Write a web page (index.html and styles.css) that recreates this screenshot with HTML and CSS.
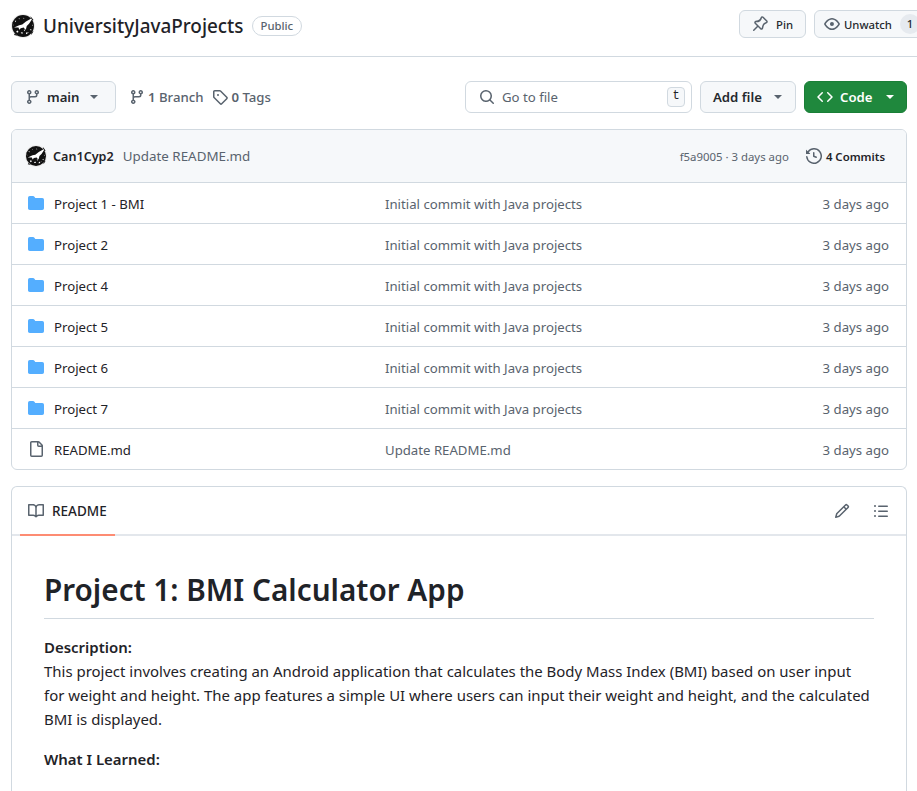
FILE: index.html
```html
<!DOCTYPE html>
<html lang="en">
<head>
    <meta charset="UTF-8">
    <meta name="viewport" content="width=device-width, initial-scale=1.0">
    <title>UniversityJavaProjects</title>
    <link rel="stylesheet" href="styles.css">
</head>
<body>
    <svg class="icon-defs" width="0" height="0">
        <defs>
            <symbol id="i-branch" viewBox="0 0 16 16"><path d="M9.5 3.25a2.25 2.25 0 1 1 3 2.122V6A2.5 2.5 0 0 1 10 8.5H6a1 1 0 0 0-1 1v1.128a2.251 2.251 0 1 1-1.5 0V5.372a2.25 2.25 0 1 1 1.5 0v1.836A2.493 2.493 0 0 1 6 7h4a1 1 0 0 0 1-1v-.628A2.25 2.25 0 0 1 9.5 3.25Zm-6 0a.75.75 0 1 0 1.5 0 .75.75 0 0 0-1.5 0Zm8.25-.75a.75.75 0 1 0 0 1.5.75.75 0 0 0 0-1.5ZM4.25 12a.75.75 0 1 0 0 1.5.75.75 0 0 0 0-1.5Z"/></symbol>
            <symbol id="i-tag" viewBox="0 0 16 16"><path d="M1 7.775V2.75C1 1.784 1.784 1 2.75 1h5.025c.464 0 .91.184 1.238.513l6.25 6.25a1.75 1.75 0 0 1 0 2.474l-5.026 5.026a1.75 1.75 0 0 1-2.474 0l-6.25-6.25A1.752 1.752 0 0 1 1 7.775Zm1.5 0c0 .066.026.13.073.177l6.25 6.25a.25.25 0 0 0 .354 0l5.025-5.025a.25.25 0 0 0 0-.354l-6.25-6.25a.25.25 0 0 0-.177-.073H2.75a.25.25 0 0 0-.25.25ZM6 5a1 1 0 1 1 0 2 1 1 0 0 1 0-2Z"/></symbol>
            <symbol id="i-folder" viewBox="0 0 16 16"><path d="M1.75 1A1.75 1.75 0 0 0 0 2.75v10.5C0 14.216.784 15 1.75 15h12.5A1.75 1.75 0 0 0 16 13.25v-8.5A1.75 1.75 0 0 0 14.25 3H7.5a.25.25 0 0 1-.2-.1l-.9-1.2C6.07 1.26 5.55 1 5 1H1.75Z"/></symbol>
            <symbol id="i-file" viewBox="0 0 16 16"><path d="M2 1.75C2 .784 2.784 0 3.75 0h6.586c.464 0 .909.184 1.237.513l2.914 2.914c.329.328.513.773.513 1.237v9.586A1.75 1.75 0 0 1 13.25 16h-9.5A1.75 1.75 0 0 1 2 14.25Zm1.75-.25a.25.25 0 0 0-.25.25v12.5c0 .138.112.25.25.25h9.5a.25.25 0 0 0 .25-.25V6h-2.75A1.75 1.75 0 0 1 9 4.25V1.5Zm6.75.062V4.25c0 .138.112.25.25.25h2.688l-.011-.013-2.914-2.914-.013-.011Z"/></symbol>
            <symbol id="i-avatar" viewBox="0 0 32 32">
                <circle cx="16" cy="16" r="16" fill="#ececec"/>
                <circle cx="16" cy="16" r="14.6" fill="#111"/>
                <path fill="#111" d="M2 11l4-1 0 4-3 1ZM26 3l4 5-3 1ZM27 24l3-1-3 5ZM5 26l4 3-5-1Z"/>
                <path fill="#fff" d="M4 18l7-3 4-1 5-4 7-4 1 1-4 6-3 3-1 4-1 1-2-3-4 1-2 2-1-3-5 0Z"/>
                <path fill="#fff" d="M7 23l2-1 1 2-2 1ZM20 25l2-1 0 2-2 1ZM13 25l2-1 1 2-2 0ZM5 9l2 0-1 2ZM25 21l2-1 0 2ZM10 6l2 0-1 1ZM17 5l1 1-2 0ZM3 14l1 1-1 0ZM29 15l-1 1 0-2ZM17 21l2 0-1 2ZM23 24l1 0 0 1Z"/>
            </symbol>
        </defs>
    </svg>

    <div class="page">
        <header class="repo-head">
            <div class="repo-title">
                <svg class="avatar avatar-lg"><use href="#i-avatar"/></svg>
                <span class="repo-name">UniversityJavaProjects</span>
                <span class="badge">Public</span>
            </div>
            <div class="repo-actions">
                <button class="btn btn-sm btn-pin">
                    <svg class="icon" viewBox="0 0 16 16"><path d="M4.456.734a1.75 1.75 0 0 1 2.826.504l.613 1.327a3.08 3.08 0 0 0 2.084 1.707l2.454.584c1.332.317 1.8 1.972.832 2.94L11.06 10l3.72 3.72a.748.748 0 0 1-.332 1.265.75.75 0 0 1-.729-.205L10 11.06l-2.204 2.205c-.968.968-2.623.5-2.94-.832l-.584-2.454a3.08 3.08 0 0 0-1.707-2.084l-1.327-.613a1.75 1.75 0 0 1-.504-2.826L4.456.734ZM5.92 1.866a.25.25 0 0 0-.404-.072L1.794 5.516a.25.25 0 0 0 .072.404l1.328.613A4.582 4.582 0 0 1 5.73 9.63l.584 2.454a.25.25 0 0 0 .42.12l5.47-5.47a.25.25 0 0 0-.12-.42L9.63 6.13a4.58 4.58 0 0 1-3.098-2.537Z" transform="translate(16 0) scale(-1 1)"/></svg>
                    Pin
                </button>
                <button class="btn btn-sm btn-watch">
                    <svg class="icon" viewBox="0 0 16 16"><path d="M8 2c1.981 0 3.671.992 4.933 2.078 1.27 1.091 2.187 2.345 2.637 3.023a1.62 1.62 0 0 1 0 1.798c-.45.678-1.367 1.932-2.637 3.023C11.67 13.008 9.981 14 8 14c-1.981 0-3.671-.992-4.933-2.078C1.797 10.83.88 9.576.43 8.898a1.62 1.62 0 0 1 0-1.798c.45-.677 1.367-1.931 2.637-3.022C4.33 2.992 6.019 2 8 2ZM1.679 7.932a.12.12 0 0 0 0 .136c.411.622 1.241 1.75 2.366 2.717C5.176 11.758 6.527 12.5 8 12.5c1.473 0 2.825-.742 3.955-1.715 1.124-.967 1.954-2.096 2.366-2.717a.12.12 0 0 0 0-.136c-.412-.621-1.242-1.75-2.366-2.717C10.824 4.242 9.473 3.5 8 3.5c-1.473 0-2.825.742-3.955 1.715-1.124.967-1.954 2.096-2.366 2.717ZM8 10a2 2 0 1 1-.001-3.999A2 2 0 0 1 8 10Z"/></svg>
                    Unwatch
                    <span class="counter">1</span>
                </button>
            </div>
        </header>

        <div class="toolbar">
            <button class="btn btn-branch">
                <svg class="icon"><use href="#i-branch"/></svg>
                main
                <span class="caret"></span>
            </button>
            <div class="refs">
                <a class="ref"><svg class="icon"><use href="#i-branch"/></svg><span><b>1</b> Branch</span></a>
                <a class="ref"><svg class="icon"><use href="#i-tag"/></svg><span><b>0</b> Tags</span></a>
            </div>
            <div class="search">
                <svg class="icon" viewBox="0 0 16 16"><path d="M10.68 11.74a6 6 0 0 1-7.922-8.982 6 6 0 0 1 8.982 7.922l3.04 3.04a.749.749 0 0 1-.326 1.275.749.749 0 0 1-.734-.215ZM11.5 7a4.499 4.499 0 1 0-8.997 0A4.499 4.499 0 0 0 11.5 7Z"/></svg>
                <span class="search-text">Go to file</span>
                <kbd class="key">t</kbd>
            </div>
            <button class="btn btn-add">Add file <span class="caret"></span></button>
            <button class="btn btn-code">
                <svg class="icon" viewBox="0 0 16 16"><path d="m11.28 3.22 4.25 4.25a.75.75 0 0 1 0 1.06l-4.25 4.25a.749.749 0 0 1-1.275-.326.749.749 0 0 1 .215-.734L13.94 8l-3.72-3.72a.749.749 0 0 1 .326-1.275.749.749 0 0 1 .734.215Zm-6.56 0a.751.751 0 0 1 1.042.018.751.751 0 0 1 .018 1.042L2.06 8l3.72 3.72a.749.749 0 0 1-.326 1.275.749.749 0 0 1-.734-.215L.47 8.53a.75.75 0 0 1 0-1.06Z"/></svg>
                Code
                <span class="caret"></span>
            </button>
        </div>

        <div class="files">
            <div class="commit-bar">
                <svg class="avatar"><use href="#i-avatar"/></svg>
                <span class="commit-author">Can1Cyp2</span>
                <span class="commit-msg">Update README.md</span>
                <span class="commit-hash">f5a9005 · 3 days ago</span>
                <span class="commit-count">
                    <svg class="icon" viewBox="0 0 16 16"><path d="m.427 1.927 1.215 1.215a8.002 8.002 0 1 1-1.6 5.685.75.75 0 1 1 1.493-.154 6.5 6.5 0 1 0 1.18-4.458l1.358 1.358A.25.25 0 0 1 3.896 6H.25A.25.25 0 0 1 0 5.75V2.104a.25.25 0 0 1 .427-.177ZM7.75 4a.75.75 0 0 1 .75.75v2.992l2.028.812a.75.75 0 0 1-.557 1.392l-2.5-1A.751.751 0 0 1 7 8.25v-3.5A.75.75 0 0 1 7.75 4Z"/></svg>
                    4 Commits
                </span>
            </div>
            <div class="file-row">
                <svg class="icon folder"><use href="#i-folder"/></svg>
                <span class="file-name">Project 1 - BMI</span>
                <span class="file-msg">Initial commit with Java projects</span>
                <span class="file-age">3 days ago</span>
            </div>
            <div class="file-row">
                <svg class="icon folder"><use href="#i-folder"/></svg>
                <span class="file-name">Project 2</span>
                <span class="file-msg">Initial commit with Java projects</span>
                <span class="file-age">3 days ago</span>
            </div>
            <div class="file-row">
                <svg class="icon folder"><use href="#i-folder"/></svg>
                <span class="file-name">Project 4</span>
                <span class="file-msg">Initial commit with Java projects</span>
                <span class="file-age">3 days ago</span>
            </div>
            <div class="file-row">
                <svg class="icon folder"><use href="#i-folder"/></svg>
                <span class="file-name">Project 5</span>
                <span class="file-msg">Initial commit with Java projects</span>
                <span class="file-age">3 days ago</span>
            </div>
            <div class="file-row">
                <svg class="icon folder"><use href="#i-folder"/></svg>
                <span class="file-name">Project 6</span>
                <span class="file-msg">Initial commit with Java projects</span>
                <span class="file-age">3 days ago</span>
            </div>
            <div class="file-row">
                <svg class="icon folder"><use href="#i-folder"/></svg>
                <span class="file-name">Project 7</span>
                <span class="file-msg">Initial commit with Java projects</span>
                <span class="file-age">3 days ago</span>
            </div>
            <div class="file-row">
                <svg class="icon doc"><use href="#i-file"/></svg>
                <span class="file-name">README.md</span>
                <span class="file-msg">Update README.md</span>
                <span class="file-age">3 days ago</span>
            </div>
        </div>

        <section class="readme">
            <div class="readme-head">
                <div class="readme-tab">
                    <svg class="icon" viewBox="0 0 16 16"><path d="M0 1.75A.75.75 0 0 1 .75 1h4.253c1.227 0 2.317.59 3 1.501A3.743 3.743 0 0 1 11.006 1h4.245a.75.75 0 0 1 .75.75v10.5a.75.75 0 0 1-.75.75h-4.507a2.25 2.25 0 0 0-1.591.659l-.622.621a.75.75 0 0 1-1.06 0l-.622-.621A2.25 2.25 0 0 0 5.258 13H.75a.75.75 0 0 1-.75-.75Zm7.251 10.324.004-5.073-.002-2.253A2.25 2.25 0 0 0 5.003 2.5H1.5v9h3.757a3.75 3.75 0 0 1 1.994.574ZM8.755 4.75l-.004 7.322a3.752 3.752 0 0 1 1.992-.572H14.5v-9h-3.495a2.25 2.25 0 0 0-2.25 2.25Z"/></svg>
                    README
                </div>
                <div class="readme-tools">
                    <svg class="icon" viewBox="0 0 16 16"><path d="M11.013 1.427a1.75 1.75 0 0 1 2.474 0l1.086 1.086a1.75 1.75 0 0 1 0 2.474l-8.61 8.61c-.21.21-.47.364-.756.445l-3.251.93a.75.75 0 0 1-.927-.928l.929-3.25c.081-.286.235-.547.445-.758l8.61-8.61Zm.176 4.823L9.75 4.81l-6.286 6.287a.253.253 0 0 0-.064.108l-.558 1.953 1.953-.558a.253.253 0 0 0 .108-.064Zm1.238-3.763a.25.25 0 0 0-.354 0L10.811 3.75l1.439 1.44 1.263-1.263a.25.25 0 0 0 0-.354Z"/></svg>
                    <svg class="icon" viewBox="0 0 16 16"><path d="M5.75 2.5h8.5a.75.75 0 0 1 0 1.5h-8.5a.75.75 0 0 1 0-1.5Zm0 5h8.5a.75.75 0 0 1 0 1.5h-8.5a.75.75 0 0 1 0-1.5Zm0 5h8.5a.75.75 0 0 1 0 1.5h-8.5a.75.75 0 0 1 0-1.5ZM2 14a1 1 0 1 1 0-2 1 1 0 0 1 0 2Zm1-6a1 1 0 1 1-2 0 1 1 0 0 1 2 0ZM2 4a1 1 0 1 1 0-2 1 1 0 0 1 0 2Z"/></svg>
                </div>
            </div>
            <article class="markdown">
                <h1>Project 1: BMI Calculator App</h1>
                <p><strong>Description:</strong><br>
                This project involves creating an Android application that calculates the Body Mass Index (BMI) based on user input for weight and height. The app features a simple UI where users can input their weight and height, and the calculated BMI is displayed.</p>
                <p><strong>What I Learned:</strong></p>
            </article>
        </section>
    </div>
</body>
</html>
```

FILE: styles.css
```css
html, body {
    height: 100%;
    overflow: hidden;
}

body {
    margin: 0;
    background: #fff;
    color: #1f2328;
    font-family: "Noto Sans", "Open Sans", sans-serif;
    font-size: 13.2px;
}

.icon-defs {
    position: absolute;
}

.icon {
    width: 16px;
    height: 16px;
    fill: #59636e;
    flex-shrink: 0;
}

.page {
    display: flex;
    flex-direction: column;
    height: 100%;
    padding: 0 10px 0 11px;
    box-sizing: border-box;
}

.avatar {
    width: 22px;
    height: 22px;
    flex-shrink: 0;
}

.avatar-lg {
    width: 24px;
    height: 24px;
}

/* repo header */
.repo-head {
    display: flex;
    align-items: center;
    flex: 0 0 57px;
    margin-right: -10px;
    padding-bottom: 8px;
    box-sizing: border-box;
    border-bottom: 1px solid #d1d9e0;
}

.repo-title {
    display: flex;
    align-items: center;
    flex: 0 0 728px;
    margin-top: 3px;
}

.repo-name {
    margin-left: 8px;
    font-size: 18.9px;
    font-weight: 500;
}

.badge {
    margin-left: 8px;
    padding: 0 8px;
    border: 1px solid #d1d9e0;
    border-radius: 10px;
    color: #59636e;
    font-size: 11.3px;
    font-weight: 500;
    line-height: 18px;
}

.repo-actions {
    display: flex;
    gap: 8px;
    flex-shrink: 0;
}

/* buttons */
.btn {
    display: flex;
    align-items: center;
    height: 32px;
    padding: 0 12px;
    box-sizing: border-box;
    border: 1px solid #d1d9e0;
    border-radius: 6px;
    background: #f6f8fa;
    color: #25292e;
    font-family: inherit;
    font-size: 13.2px;
    font-weight: 500;
    white-space: nowrap;
}

.btn-sm {
    height: 28px;
    font-size: 11.3px;
}

.btn-pin {
    width: 67px;
    gap: 8px;
}

.btn-watch {
    gap: 4px;
    padding: 0 10px 0 9px;
}

.counter {
    display: inline-block;
    min-width: 20px;
    margin-left: 4px;
    border-radius: 10px;
    background: #e6eaef;
    font-size: 11.3px;
    line-height: 20px;
    text-align: center;
}

.caret {
    width: 0;
    height: 0;
    border-top: 4px solid #59636e;
    border-left: 4px solid transparent;
    border-right: 4px solid transparent;
}

/* toolbar */
.toolbar {
    display: flex;
    align-items: center;
    flex-shrink: 0;
    margin-top: 24px;
}

.btn-branch {
    width: 105px;
    gap: 6px;
    padding-left: 13px;
    font-weight: 600;
}

.btn-branch .caret {
    margin-left: auto;
    margin-right: 5px;
}

.refs {
    display: flex;
    gap: 9px;
    flex: 1;
    margin-left: 13px;
}

.ref {
    display: flex;
    align-items: center;
    gap: 3px;
    color: #59636e;
    font-weight: 500;
}

.ref b {
    font-weight: 600;
}

.search {
    display: flex;
    align-items: center;
    width: 227px;
    height: 32px;
    padding: 0 6px 0 13px;
    box-sizing: border-box;
    border: 1px solid #d1d9e0;
    border-radius: 6px;
}

.search-text {
    flex: 1;
    margin-left: 7px;
    color: #59636e;
}

.key {
    width: 16px;
    height: 18px;
    border: 1px solid #d1d9e0;
    border-radius: 4px;
    background: #f6f8fa;
    font-family: "Liberation Mono", monospace;
    font-size: 12px;
    line-height: 17px;
    text-align: center;
}

.btn-add {
    width: 96px;
    margin-left: 8px;
    font-weight: 600;
}

.btn-add .caret {
    margin-left: auto;
    margin-right: 1px;
}

.btn-code {
    width: 103px;
    gap: 7px;
    margin-left: 8px;
    border-color: #1a7f37;
    background: #1f883d;
    color: #fff;
    font-weight: 600;
}

.btn-code .icon {
    fill: #fff;
}

.btn-code .caret {
    margin-left: auto;
    border-top-color: #fff;
}

/* file table */
.files {
    flex-shrink: 0;
    margin-top: 16px;
    border: 1px solid #d1d9e0;
    border-radius: 6px;
    overflow: hidden;
}

.commit-bar {
    display: flex;
    align-items: center;
    height: 53px;
    padding: 0 21px 0 13px;
    box-sizing: border-box;
    border-bottom: 1px solid #d1d9e0;
    background: #f6f8fa;
}

.commit-author {
    margin-left: 6px;
    font-size: 12.6px;
    font-weight: 600;
}

.commit-msg {
    flex: 1;
    margin-left: 9px;
    color: #59636e;
    font-size: 13.4px;
}

.commit-hash {
    color: #59636e;
    font-size: 11.4px;
}

.commit-count {
    display: flex;
    align-items: center;
    gap: 4px;
    margin-left: 17px;
    font-size: 11.4px;
    font-weight: 600;
}

.file-row {
    display: flex;
    align-items: center;
    height: 41px;
    padding: 0 17px 0 16px;
    box-sizing: border-box;
    border-bottom: 1px solid #d1d9e0;
}

.file-row:last-child {
    border-bottom: 0;
    height: 40px;
}

.folder {
    fill: #54aeff;
}

.file-name {
    flex: 0 0 331px;
    margin-left: 10px;
    padding-top: 2px;
}

.file-msg {
    flex: 1;
    padding-top: 2px;
    color: #59636e;
}

.file-age {
    padding-top: 2px;
    color: #59636e;
}

/* readme */
.readme {
    flex: 1;
    min-height: 0;
    margin-top: 16px;
    border: 1px solid #d1d9e0;
    border-bottom: 0;
    border-radius: 6px 6px 0 0;
}

.readme-head {
    display: flex;
    align-items: center;
    justify-content: space-between;
    height: 47px;
    padding: 0 17px 0 8px;
    border-bottom: 2px solid #e3e7ec;
}

.readme-tab {
    display: flex;
    align-items: center;
    gap: 8px;
    align-self: stretch;
    width: 95px;
    margin-bottom: -2px;
    padding-left: 8px;
    box-sizing: border-box;
    border-bottom: 2px solid #fd8c73;
    font-size: 13.5px;
    font-weight: 500;
}

.readme-tools {
    display: flex;
    gap: 23px;
}

.markdown {
    padding: 34px 32px 0;
    font-size: 14.96px;
    line-height: 24px;
}

.markdown h1 {
    margin: 0 0 16px;
    padding-bottom: 8px;
    border-bottom: 1px solid #d1d9e0;
    font-size: 29.7px;
    font-weight: 600;
    line-height: 40px;
}

.markdown p {
    margin: 0 0 16px;
}

.markdown strong {
    font-weight: 600;
}
```
